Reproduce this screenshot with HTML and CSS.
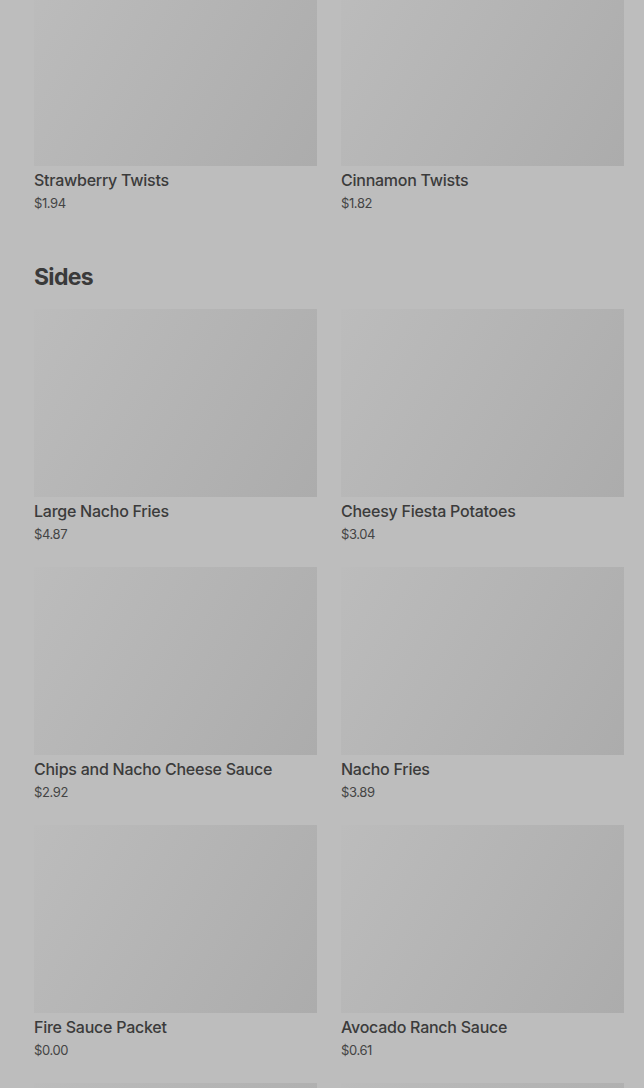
FILE: index.html
```html
<!DOCTYPE html>
<html lang="en">
<head>
    <meta charset="UTF-8">
    <meta name="viewport" content="width=device-width, initial-scale=1.0">
    <title>Menu</title>
    <link rel="stylesheet" href="styles.css">
</head>
<body>

<div class="menu">
    <!-- fim da secao anterior -->
    <section class="section first">
        <div class="grid">
            <div class="item">
                <div class="thumb"></div>
                <p class="name">Strawberry Twists</p>
                <p class="price">$1.94</p>
            </div>
            <div class="item">
                <div class="thumb"></div>
                <p class="name">Cinnamon Twists</p>
                <p class="price">$1.82</p>
            </div>
        </div>
    </section>

    <section class="section">
        <h2 class="title">Sides</h2>
        <div class="grid">
            <div class="item">
                <div class="thumb"></div>
                <p class="name">Large Nacho Fries</p>
                <p class="price">$4.87</p>
            </div>
            <div class="item">
                <div class="thumb"></div>
                <p class="name">Cheesy Fiesta Potatoes</p>
                <p class="price">$3.04</p>
            </div>
            <div class="item">
                <div class="thumb"></div>
                <p class="name">Chips and Nacho Cheese Sauce</p>
                <p class="price">$2.92</p>
            </div>
            <div class="item">
                <div class="thumb"></div>
                <p class="name">Nacho Fries</p>
                <p class="price">$3.89</p>
            </div>
            <div class="item">
                <div class="thumb"></div>
                <p class="name">Fire Sauce Packet</p>
                <p class="price">$0.00</p>
            </div>
            <div class="item">
                <div class="thumb"></div>
                <p class="name">Avocado Ranch Sauce</p>
                <p class="price">$0.61</p>
            </div>
            <!-- proxima linha (so a imagem aparece) -->
            <div class="item">
                <div class="thumb"></div>
            </div>
            <div class="item">
                <div class="thumb"></div>
            </div>
        </div>
    </section>
</div>

</body>
</html>
```

FILE: styles.css
```css
body {
    margin: 0;
    padding: 0;
    background-color: #bdbdbd;
    font-family: Inter, "Noto Sans", sans-serif;
    color: #3b3b3b;
    overflow: hidden;
}
.menu {
    padding: 0 20px 0 34px;
}
.section.first {
    margin-top: -22px;
}
.title {
    margin: 47px 0 16px;
    font-size: 23px;
    line-height: 32px;
    font-weight: 700;
    letter-spacing: -0.7px;
    color: #3a3a3a;
}
.grid {
    display: grid;
    grid-template-columns: 1fr 1fr;
    column-gap: 24px;
    row-gap: 22px;
}
.thumb {
    height: 188px;
    background: linear-gradient(120deg, #bcbcbc 0%, #b4b4b4 50%, #acacac 100%);
}
.name {
    margin: 2px 0 0;
    font-size: 16px;
    line-height: 24px;
    font-weight: 500;
    letter-spacing: -0.25px;
}
.price {
    margin: 0;
    font-size: 13px;
    line-height: 22px;
    letter-spacing: -0.4px;
    color: #444;
}
```
